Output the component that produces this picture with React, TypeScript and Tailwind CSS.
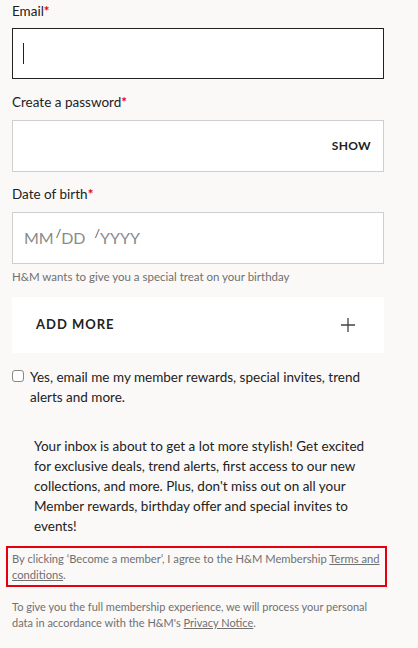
import React from 'react';

const font = { fontFamily: 'Lato, "Open Sans", Arial, sans-serif' };

const Label: React.FC<{ text: string }> = ({ text }) => (
  <label className="block text-[13.5px] leading-[18px] text-[#222]">
    {text}
    <span className="text-[#e50010] font-bold">*</span>
  </label>
);

export default function App() {
  return (
    <div className="min-h-[648px] w-[418px] bg-[#faf9f8]" style={font}>
      <div className="w-[372px] ml-3 pt-[2px]">
        <Label text="Email" />
        <div className="mt-2 h-[51px] border border-[#222] bg-white flex items-center pl-[10px]">
          <div className="w-px h-[21px] bg-[#222]" />
        </div>

        <div className="mt-[14px]">
          <Label text="Create a password" />
        </div>
        <div className="mt-[9px] h-[52px] border border-[#cfcfcf] bg-white flex items-center justify-end pr-3">
          <span className="text-[12px] font-bold tracking-[0.3px] text-[#222]">SHOW</span>
        </div>

        <div className="mt-[13px]">
          <Label text="Date of birth" />
        </div>
        <div className="mt-[9px] h-[52px] border border-[#cfcfcf] bg-white flex items-center pl-[11px] text-[16px] text-[#8a8a8a]">
          <span>MM</span>
          <span className="text-[12px] -mt-2 ml-[2px] text-[#444]">/</span>
          <span>DD</span>
          <span className="text-[12px] -mt-2 ml-[9px] text-[#444]">/</span>
          <span>YYYY</span>
        </div>
        <p className="mt-[6px] text-[11.5px] leading-[14px] text-[#707070]">
          H&amp;M wants to give you a special treat on your birthday
        </p>

        <div className="mt-[13px] h-[56px] bg-white flex items-center justify-between pl-6 pr-[28px]">
          <span className="text-[13px] font-bold tracking-[1px] text-[#222]">ADD MORE</span>
          <svg width="16" height="16" viewBox="0 0 16 16" fill="none" stroke="#444" strokeWidth="1.3">
            <path d="M8 1v14M1 8h14" />
          </svg>
        </div>

        <div className="mt-[14px] flex items-start gap-[6px]">
          <div className="mt-[3px] w-3 h-3 shrink-0 border border-[#888] rounded-[3px] bg-white" />
          <p className="max-w-[334px] text-[13.5px] leading-[20px] text-[#222]">
            Yes, email me my member rewards, special invites, trend alerts and more.
          </p>
        </div>

        <p className="mt-[29px] pl-[22px] pr-[12px] text-[13.5px] leading-[20px] text-[#222]">
          Your inbox is about to get a lot more stylish! Get excited for exclusive deals, trend
          alerts, first access to our new collections, and more. Plus, don't miss out on all your
          Member rewards, birthday offer and special invites to events!
        </p>
      </div>

      <div className="mt-[10px] ml-[6px] w-[381px] h-[41px] border-2 border-[#e50010] px-[4px] pt-[3px]">
        <p className="text-[11.2px] leading-[16px] text-[#707070]">
          By clicking ‘Become a member’, I agree to the H&amp;M Membership{' '}
          <a className="underline">Terms and conditions</a>.
        </p>
      </div>

      <p className="mt-[12px] ml-3 w-[372px] text-[11px] leading-[16px] text-[#707070]">
        To give you the full membership experience, we will process your personal data in
        accordance with the H&amp;M's <a className="underline">Privacy Notice</a>.
      </p>
    </div>
  );
}
